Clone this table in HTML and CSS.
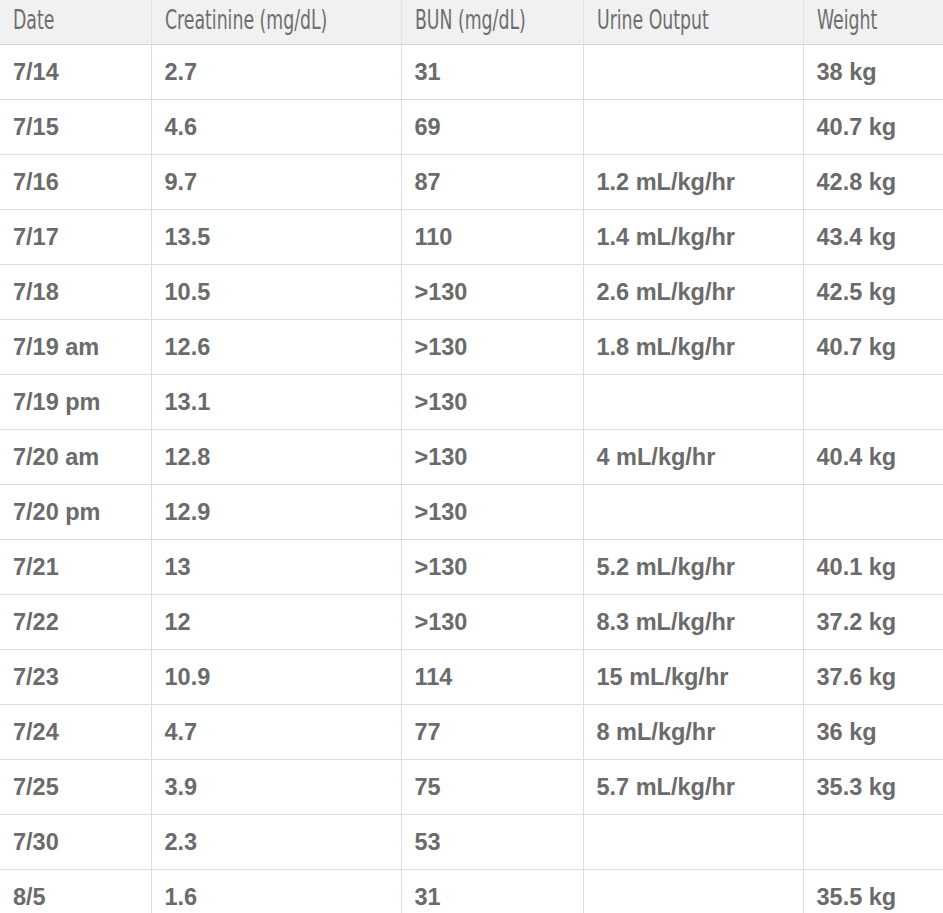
FILE: index.html
```html
<!DOCTYPE html>
<html>
<head>
<meta charset="utf-8">
<link rel="stylesheet" href="styles.css">
</head>
<body>
<table class="labs">
  <colgroup>
    <col class="c1"><col class="c2"><col class="c3"><col class="c4"><col class="c5">
  </colgroup>
  <thead>
    <tr><th><span class="hd">Date</span></th><th><span class="hd">Creatinine (mg/dL)</span></th><th><span class="hd">BUN (mg/dL)</span></th><th><span class="hd">Urine Output</span></th><th><span class="hd">Weight</span></th></tr>
  </thead>
  <tbody>
    <tr><td>7/14</td><td>2.7</td><td>31</td><td></td><td>38 kg</td></tr>
    <tr><td>7/15</td><td>4.6</td><td>69</td><td></td><td>40.7 kg</td></tr>
    <tr><td>7/16</td><td>9.7</td><td>87</td><td>1.2 mL/kg/hr</td><td>42.8 kg</td></tr>
    <tr><td>7/17</td><td>13.5</td><td>110</td><td>1.4 mL/kg/hr</td><td>43.4 kg</td></tr>
    <tr><td>7/18</td><td>10.5</td><td>&gt;130</td><td>2.6 mL/kg/hr</td><td>42.5 kg</td></tr>
    <tr><td>7/19 am</td><td>12.6</td><td>&gt;130</td><td>1.8 mL/kg/hr</td><td>40.7 kg</td></tr>
    <tr><td>7/19 pm</td><td>13.1</td><td>&gt;130</td><td></td><td></td></tr>
    <tr><td>7/20 am</td><td>12.8</td><td>&gt;130</td><td>4 mL/kg/hr</td><td>40.4 kg</td></tr>
    <tr><td>7/20 pm</td><td>12.9</td><td>&gt;130</td><td></td><td></td></tr>
    <tr><td>7/21</td><td>13</td><td>&gt;130</td><td>5.2 mL/kg/hr</td><td>40.1 kg</td></tr>
    <tr><td>7/22</td><td>12</td><td>&gt;130</td><td>8.3 mL/kg/hr</td><td>37.2 kg</td></tr>
    <tr><td>7/23</td><td>10.9</td><td>114</td><td>15 mL/kg/hr</td><td>37.6 kg</td></tr>
    <tr><td>7/24</td><td>4.7</td><td>77</td><td>8 mL/kg/hr</td><td>36 kg</td></tr>
    <tr><td>7/25</td><td>3.9</td><td>75</td><td>5.7 mL/kg/hr</td><td>35.3 kg</td></tr>
    <tr><td>7/30</td><td>2.3</td><td>53</td><td></td><td></td></tr>
    <tr><td>8/5</td><td>1.6</td><td>31</td><td></td><td>35.5 kg</td></tr>
  </tbody>
</table>
</body>
</html>
```
FILE: styles.css
```css
html, body {
  margin: 0;
  padding: 0;
  background: #ffffff;
  overflow: hidden;
}

.labs {
  border-collapse: collapse;
  table-layout: fixed;
  width: 980px;
  margin-left: 0;
  color: #6b6b6b;
}

.c1 { width: 151px; }
.c2 { width: 250px; }
.c3 { width: 182px; }
.c4 { width: 220px; }
.c5 { width: 177px; }

.labs th {
  height: 44px;
  padding: 0 13px;
  background: #f1f1f1;
  border-left: 1px solid #e2e2e2;
  border-bottom: 1px solid #d6d6d6;
  text-align: left;
  font-family: "DejaVu Sans Condensed", "DejaVu Sans", sans-serif;
  font-stretch: condensed;
  font-weight: 400;
  font-size: 26px;
  line-height: 30px;
  color: #6e6e6e;
  vertical-align: middle;
  box-sizing: border-box;
  white-space: nowrap;
}

.hd {
  display: inline-block;
  transform: scaleX(0.74);
  transform-origin: left center;
  position: relative;
  top: -2px;
}

.labs th:first-child,
.labs td:first-child {
  border-left: none;
}

.labs td {
  height: 55px;
  padding: 2px 13px 0;
  border-left: 1px solid #dedede;
  border-bottom: 1px solid #dedede;
  font-family: "Liberation Sans", Arial, sans-serif;
  font-weight: 700;
  font-size: 23.5px;
  color: #6b6b6b;
  vertical-align: middle;
  box-sizing: border-box;
}
```
